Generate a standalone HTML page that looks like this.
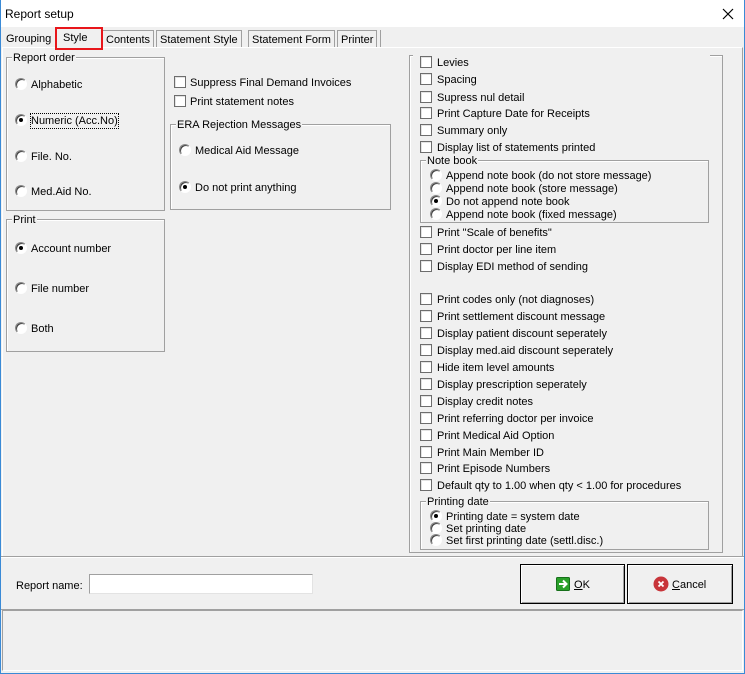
<!DOCTYPE html>
<html><head><meta charset="utf-8"><style>
*{box-sizing:border-box;margin:0;padding:0}
body{width:745px;height:674px;background:#f0f0f0;font-family:"Liberation Sans",Tahoma,sans-serif;font-size:11px;color:#000;position:relative;overflow:hidden}
.a{position:absolute;white-space:nowrap;line-height:13px;padding-top:1px}
.g{position:absolute;border:1px solid #a0a0a0;box-shadow:inset 1px 1px 0 #fff}
.gt{position:absolute;background:#f0f0f0;padding:0 1px;line-height:12px;white-space:nowrap;padding-top:1px}
.cb{position:absolute;width:12px;height:12px;border:1px solid #6d6d6d;background:#fff;box-shadow:inset 1px 1px 0 #e3e3e3}
.rb{position:absolute;width:12px;height:12px;border-radius:50%;border:1px solid #8a8a8a;border-right-color:#fff;border-bottom-color:#fff;background:#fff;box-shadow:inset 1px 1px 0 #404040}
.rb.on::after{content:"";position:absolute;left:3px;top:3px;width:4px;height:4px;border-radius:50%;background:#000}
.tab{position:absolute;top:30px;height:17px;border:1px solid #a0a0a0;border-bottom:none;line-height:16px;padding:1px 3px 0;background:#f0f0f0}
.btn{position:absolute;border:1px solid #000;background:#f0f0f0;box-shadow:inset 1px 1px 0 #fff,inset -1px -1px 0 #a0a0a0}
</style></head><body>
<div style="position:absolute;left:0;top:0;width:745px;height:27px;background:#fff"></div>
<div style="position:absolute;left:0;top:0;width:1px;height:674px;background:#3a8ad6"></div>
<div style="position:absolute;right:0;top:0;width:1px;height:674px;background:#3a8ad6"></div>
<div style="position:absolute;left:0;bottom:0;width:745px;height:1px;background:#3a8ad6"></div>
<div class="a" style="left:5px;top:7px;font-size:12px">Report setup</div>
<svg style="position:absolute;left:722px;top:8px" width="12" height="12"><path d="M1 1L11 11M11 1L1 11" stroke="#000" stroke-width="1.2"/></svg>

<div style="position:absolute;left:2px;top:47px;width:741px;height:509px;border-top:1px solid #fff;border-left:1px solid #fff;border-right:1px solid #a0a0a0"></div>
<div class="tab" style="left:3px;border:none">Grouping</div>
<div class="tab" style="left:102px">Contents</div>
<div class="tab" style="left:156px">Statement Style</div>
<div class="tab" style="left:248px">Statement Form</div>
<div class="tab" style="left:337px">Printer</div>
<div style="position:absolute;left:380px;top:30px;width:1px;height:17px;background:#a0a0a0"></div>
<div style="position:absolute;left:55px;top:27px;width:48px;height:23px;border:2px solid #e8161b;background:#f0f0f0"></div>
<div class="a" style="left:63px;top:31px">Style</div>

<div class="g" style="left:6px;top:57px;width:159px;height:154px"></div>
<div class="gt" style="left:12px;top:51px">Report order</div>
<div class="rb" style="left:15px;top:78px"></div><div class="a" style="left:31px;top:78px">Alphabetic</div>
<div class="rb on" style="left:15px;top:114px"></div><div class="a" style="left:31px;top:114px;outline:1px dotted #000">Numeric (Acc.No)</div>
<div class="rb" style="left:15px;top:150px"></div><div class="a" style="left:31px;top:150px">File. No.</div>
<div class="rb" style="left:15px;top:185px"></div><div class="a" style="left:31px;top:185px">Med.Aid No.</div>

<div class="g" style="left:6px;top:219px;width:159px;height:133px"></div>
<div class="gt" style="left:12px;top:213px">Print</div>
<div class="rb on" style="left:15px;top:242px"></div><div class="a" style="left:31px;top:242px">Account number</div>
<div class="rb" style="left:15px;top:282px"></div><div class="a" style="left:31px;top:282px">File number</div>
<div class="rb" style="left:15px;top:322px"></div><div class="a" style="left:31px;top:322px">Both</div>

<div class="cb" style="left:174px;top:76px"></div><div class="a" style="left:190px;top:76px">Suppress Final Demand Invoices</div>
<div class="cb" style="left:174px;top:95px"></div><div class="a" style="left:190px;top:95px">Print statement notes</div>
<div class="g" style="left:170px;top:124px;width:221px;height:86px"></div>
<div class="gt" style="left:176px;top:118px">ERA Rejection Messages</div>
<div class="rb" style="left:179px;top:144px"></div><div class="a" style="left:195px;top:144px">Medical Aid Message</div>
<div class="rb on" style="left:179px;top:181px"></div><div class="a" style="left:195px;top:181px">Do not print anything</div>

<div class="g" style="left:409px;top:55px;width:314px;height:498px"></div>
<div style="position:absolute;left:413px;top:54px;width:297px;height:3px;background:#f0f0f0"></div>
<div class="cb" style="left:420px;top:56px"></div><div class="a" style="left:437px;top:56px">Levies</div>
<div class="cb" style="left:420px;top:73px"></div><div class="a" style="left:437px;top:73px">Spacing</div>
<div class="cb" style="left:420px;top:91px"></div><div class="a" style="left:437px;top:91px">Supress nul detail</div>
<div class="cb" style="left:420px;top:107px"></div><div class="a" style="left:437px;top:107px">Print Capture Date for Receipts</div>
<div class="cb" style="left:420px;top:124px"></div><div class="a" style="left:437px;top:124px">Summary only</div>
<div class="cb" style="left:420px;top:141px"></div><div class="a" style="left:437px;top:141px">Display list of statements printed</div>
<div class="g" style="left:420px;top:160px;width:289px;height:63px"></div>
<div class="gt" style="left:426px;top:154px">Note book</div>
<div class="rb" style="left:430px;top:169px"></div><div class="a" style="left:446px;top:169px">Append note book (do not store message)</div>
<div class="rb" style="left:430px;top:182px"></div><div class="a" style="left:446px;top:182px">Append note book (store message)</div>
<div class="rb on" style="left:430px;top:195px"></div><div class="a" style="left:446px;top:195px">Do not append note book</div>
<div class="rb" style="left:430px;top:208px"></div><div class="a" style="left:446px;top:208px">Append note book (fixed message)</div>
<div class="cb" style="left:420px;top:226px"></div><div class="a" style="left:437px;top:226px">Print "Scale of benefits"</div>
<div class="cb" style="left:420px;top:243px"></div><div class="a" style="left:437px;top:243px">Print doctor per line item</div>
<div class="cb" style="left:420px;top:260px"></div><div class="a" style="left:437px;top:260px">Display EDI method of sending</div>
<div class="cb" style="left:420px;top:293px"></div><div class="a" style="left:437px;top:293px">Print codes only (not diagnoses)</div>
<div class="cb" style="left:420px;top:310px"></div><div class="a" style="left:437px;top:310px">Print settlement discount message</div>
<div class="cb" style="left:420px;top:327px"></div><div class="a" style="left:437px;top:327px">Display patient discount seperately</div>
<div class="cb" style="left:420px;top:344px"></div><div class="a" style="left:437px;top:344px">Display med.aid discount seperately</div>
<div class="cb" style="left:420px;top:361px"></div><div class="a" style="left:437px;top:361px">Hide item level amounts</div>
<div class="cb" style="left:420px;top:378px"></div><div class="a" style="left:437px;top:378px">Display prescription seperately</div>
<div class="cb" style="left:420px;top:395px"></div><div class="a" style="left:437px;top:395px">Display credit notes</div>
<div class="cb" style="left:420px;top:412px"></div><div class="a" style="left:437px;top:412px">Print referring doctor per invoice</div>
<div class="cb" style="left:420px;top:429px"></div><div class="a" style="left:437px;top:429px">Print Medical Aid Option</div>
<div class="cb" style="left:420px;top:446px"></div><div class="a" style="left:437px;top:446px">Print Main Member ID</div>
<div class="cb" style="left:420px;top:462px"></div><div class="a" style="left:437px;top:462px">Print Episode Numbers</div>
<div class="cb" style="left:420px;top:479px"></div><div class="a" style="left:437px;top:479px">Default qty to 1.00 when qty &lt; 1.00 for procedures</div>
<div class="g" style="left:420px;top:501px;width:289px;height:49px"></div>
<div class="gt" style="left:426px;top:495px">Printing date</div>
<div class="rb on" style="left:430px;top:510px"></div><div class="a" style="left:446px;top:510px">Printing date = system date</div>
<div class="rb" style="left:430px;top:522px"></div><div class="a" style="left:446px;top:522px">Set printing date</div>
<div class="rb" style="left:430px;top:534px"></div><div class="a" style="left:446px;top:534px">Set first printing date (settl.disc.)</div>

<div style="position:absolute;left:1px;top:556px;width:743px;height:2px;border-top:1px solid #a0a0a0;border-bottom:1px solid #fff"></div>

<div class="a" style="left:16px;top:579px">Report name:</div>
<div style="position:absolute;left:89px;top:574px;width:224px;height:20px;background:#fff;border:1px solid #a0a0a0;border-right-color:#e3e3e3;border-bottom-color:#e3e3e3"></div>

<div class="btn" style="left:520px;top:564px;width:105px;height:40px"></div>
<svg style="position:absolute;left:556px;top:577px" width="14" height="14"><rect x="0.5" y="0.5" width="13" height="13" rx="1" fill="#2aa02a" stroke="#16701a"/><path d="M3 7H10M7 3.5L10.5 7L7 10.5" stroke="#fff" stroke-width="2" fill="none"/></svg>
<div class="a" style="left:574px;top:578px"><u>O</u>K</div>
<div class="btn" style="left:627px;top:564px;width:106px;height:40px"></div>
<svg style="position:absolute;left:653px;top:576px" width="16" height="16"><circle cx="8" cy="8" r="7.5" fill="#c8353a"/><path d="M5.5 5.5L10.5 10.5M10.5 5.5L5.5 10.5" stroke="#fff" stroke-width="1.8"/></svg>
<div class="a" style="left:672px;top:578px"><u>C</u>ancel</div>

<div style="position:absolute;left:1px;top:609px;width:743px;height:1px;background:#a0a0a0"></div>
<div style="position:absolute;left:2px;top:610px;width:741px;height:61px;border:1px solid #a0a0a0;border-right-color:#fff;border-bottom-color:#fff"></div>
</body></html>
